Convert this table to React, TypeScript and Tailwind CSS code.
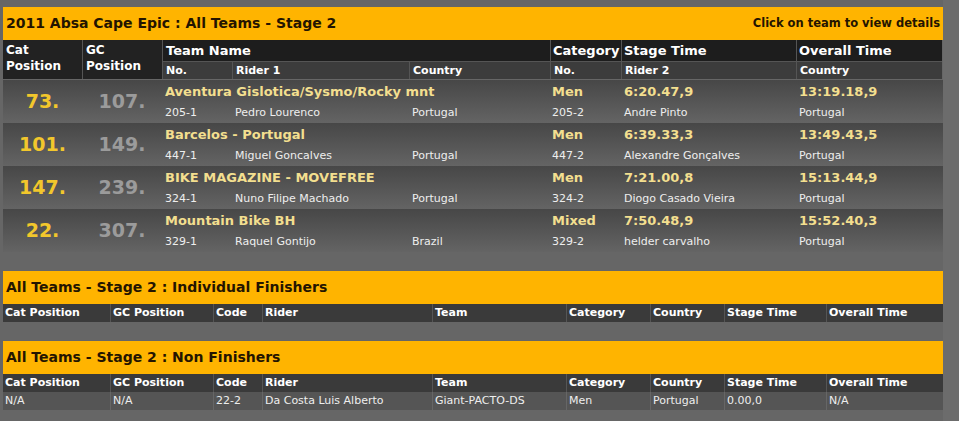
import React from "react";

const teams = [
  {
    cat: "73.",
    gc: "107.",
    name: "Aventura Gislotica/Sysmo/Rocky mnt",
    category: "Men",
    stage: "6:20.47,9",
    overall: "13:19.18,9",
    r1: ["205-1", "Pedro Lourenco", "Portugal"],
    r2: ["205-2", "Andre Pinto", "Portugal"],
  },
  {
    cat: "101.",
    gc: "149.",
    name: "Barcelos - Portugal",
    category: "Men",
    stage: "6:39.33,3",
    overall: "13:49.43,5",
    r1: ["447-1", "Miguel Goncalves", "Portugal"],
    r2: ["447-2", "Alexandre Gonçalves", "Portugal"],
  },
  {
    cat: "147.",
    gc: "239.",
    name: "BIKE MAGAZINE - MOVEFREE",
    category: "Men",
    stage: "7:21.00,8",
    overall: "15:13.44,9",
    r1: ["324-1", "Nuno Filipe Machado", "Portugal"],
    r2: ["324-2", "Diogo Casado Vieira", "Portugal"],
  },
  {
    cat: "22.",
    gc: "307.",
    name: "Mountain Bike BH",
    category: "Mixed",
    stage: "7:50.48,9",
    overall: "15:52.40,3",
    r1: ["329-1", "Raquel Gontijo", "Brazil"],
    r2: ["329-2", "helder carvalho", "Portugal"],
  },
];

const cols = [
  "Cat Position",
  "GC Position",
  "Code",
  "Rider",
  "Team",
  "Category",
  "Country",
  "Stage Time",
  "Overall Time",
];

const grid9 = "grid grid-cols-[107px_103px_49px_170px_134px_84px_74px_102px_116px]";
const grid8 = "grid grid-cols-[79px_80px_70px_177px_141px_71px_175px_146px]";

const TitleBar = ({ title, right }: { title: string; right?: string }) => (
  <div className="h-[33px] bg-[#ffb400] flex items-center justify-between px-[3px] text-[#241400]">
    <span className="text-[14px] font-bold">{title}</span>
    {right && <span className="text-[11.5px] font-bold">{right}</span>}
  </div>
);

const SmallHeader = () => (
  <div className={`${grid9} h-[18px] bg-[#3a3a3a] text-white text-[11px] font-bold`}>
    {cols.map((c, i) => (
      <div
        key={c}
        className={`px-[2px] leading-[18px] ${i > 0 ? "border-l border-[#555]" : ""}`}
      >
        {c}
      </div>
    ))}
  </div>
);

export default function App() {
  return (
    <div className="flex min-h-screen bg-[#6c6c6c]" style={{ fontFamily: '"DejaVu Sans", Verdana, sans-serif' }}>
      <div className="w-[943px] bg-[#666] pl-[3px] pt-[7px] pb-[11px]">
        <TitleBar title="2011 Absa Cape Epic : All Teams - Stage 2" right="Click on team to view details" />

        {/* main table header */}
        <div className={`${grid8} grid-rows-[21px_18px] text-white font-bold`}>
          <div className="row-span-2 bg-[#222] px-[3px] pt-[2px] text-[12px] leading-[16px]">
            Cat<br />Position
          </div>
          <div className="row-span-2 bg-[#222] border-l border-[#555] px-[3px] pt-[2px] text-[12px] leading-[16px]">
            GC<br />Position
          </div>
          <div className="col-span-3 bg-[#1d1d1d] border-l border-[#555] px-[3px] text-[13px] leading-[21px]">
            Team Name
          </div>
          <div className="bg-[#1d1d1d] border-l border-[#555] px-[2px] text-[13px] leading-[21px]">Category</div>
          <div className="bg-[#1d1d1d] border-l border-[#555] px-[2px] text-[13px] leading-[21px]">Stage Time</div>
          <div className="bg-[#1d1d1d] border-l border-[#555] px-[2px] text-[13px] leading-[21px]">Overall Time</div>
          {["No.", "Rider 1", "Country", "No.", "Rider 2", "Country"].map((h, i) => (
            <div
              key={i}
              className="bg-[#3c3c3c] border-l border-t border-[#555] px-[3px] text-[11px] leading-[17px]"
            >
              {h}
            </div>
          ))}
        </div>

        {/* team rows */}
        <div className="mt-px">
          {teams.map((t) => (
            <div
              key={t.name}
              className={`${grid8} grid-rows-[22px_21px] h-[43px] bg-gradient-to-b from-[#474747] to-[#646464] cursor-pointer`}
            >
              <div className="row-span-2 flex items-center justify-center text-[19px] font-bold text-[#f2c72c]">
                {t.cat}
              </div>
              <div className="row-span-2 flex items-center justify-center text-[19px] font-bold text-[#9b9b9b]">
                {t.gc}
              </div>
              <div className="col-span-3 px-[3px] pt-[2px] text-[13px] font-bold text-[#f3df8f] whitespace-nowrap">
                {t.name}
              </div>
              <div className="px-[2px] pt-[2px] text-[13px] font-bold text-[#f3df8f]">{t.category}</div>
              <div className="px-[3px] pt-[2px] text-[13px] font-bold text-[#f3df8f]">{t.stage}</div>
              <div className="px-[3px] pt-[2px] text-[13px] font-bold text-[#f3df8f]">{t.overall}</div>
              {[...t.r1, ...t.r2].map((v, i) => (
                <div key={i} className={`${i === 3 ? "px-[2px]" : "px-[3px]"} pt-[3px] text-[11px] text-[#eee] whitespace-nowrap`}>
                  {v}
                </div>
              ))}
            </div>
          ))}
        </div>

        <div className="mt-[19px]">
          <TitleBar title="All Teams - Stage 2 : Individual Finishers" />
          <SmallHeader />
        </div>

        <div className="mt-[19px]">
          <TitleBar title="All Teams - Stage 2 : Non Finishers" />
          <SmallHeader />
          <div className={`${grid9} h-[18px] bg-[#555] text-[#eee] text-[11px]`}>
            {["N/A", "N/A", "22-2", "Da Costa Luis Alberto", "Giant-PACTO-DS", "Men", "Portugal", "0.00,0", "N/A"].map(
              (v, i) => (
                <div
                  key={i}
                  className={`px-[2px] leading-[18px] whitespace-nowrap ${i > 0 ? "border-l border-[#666]" : ""}`}
                >
                  {v}
                </div>
              )
            )}
          </div>
        </div>
      </div>
      <div className="flex-1" />
    </div>
  );
}
